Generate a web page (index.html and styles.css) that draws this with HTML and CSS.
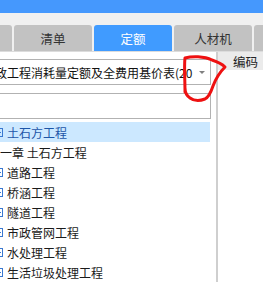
FILE: index.html
```html
<!DOCTYPE html>
<html lang="zh">
<head>
<meta charset="utf-8">
<link rel="stylesheet" href="styles.css">
</head>
<body>
<div class="topbar"></div>
<div class="tabstrip">
  <div class="tab"></div>
  <div class="tab">清单</div>
  <div class="tab active">定额</div>
  <div class="tab">人材机</div>
  <div class="tab"></div>
</div>
<div class="main">
  <div class="left">
    <div class="left-inner">
      <div class="combo">
        <span class="combo-text">市政工程消耗量定额及全费用基价表(2014)</span>
        <span class="arrow"></span>
      </div>
      <div class="search"></div>
      <ul class="tree">
        <li class="row selected"><span class="exp"><svg width="9" height="9" viewBox="0 0 9 9"><rect x="0.5" y="0.5" width="8" height="8" fill="none" stroke="#3a78d0"/><path d="M2 4.5h5M4.5 2v5" stroke="#3a78d0"/></svg></span><span class="label">土石方工程</span></li>
        <li class="row chapter"><span class="label">第一章 土石方工程</span></li>
        <li class="row"><span class="exp"><svg width="9" height="9" viewBox="0 0 9 9"><rect x="0.5" y="0.5" width="8" height="8" fill="none" stroke="#3a78d0"/><path d="M2 4.5h5M4.5 2v5" stroke="#3a78d0"/></svg></span><span class="label">道路工程</span></li>
        <li class="row"><span class="exp"><svg width="9" height="9" viewBox="0 0 9 9"><rect x="0.5" y="0.5" width="8" height="8" fill="none" stroke="#3a78d0"/><path d="M2 4.5h5M4.5 2v5" stroke="#3a78d0"/></svg></span><span class="label">桥涵工程</span></li>
        <li class="row"><span class="exp"><svg width="9" height="9" viewBox="0 0 9 9"><rect x="0.5" y="0.5" width="8" height="8" fill="none" stroke="#3a78d0"/><path d="M2 4.5h5M4.5 2v5" stroke="#3a78d0"/></svg></span><span class="label">隧道工程</span></li>
        <li class="row"><span class="exp"><svg width="9" height="9" viewBox="0 0 9 9"><rect x="0.5" y="0.5" width="8" height="8" fill="none" stroke="#3a78d0"/><path d="M2 4.5h5M4.5 2v5" stroke="#3a78d0"/></svg></span><span class="label">市政管网工程</span></li>
        <li class="row"><span class="exp"><svg width="9" height="9" viewBox="0 0 9 9"><rect x="0.5" y="0.5" width="8" height="8" fill="none" stroke="#3a78d0"/><path d="M2 4.5h5M4.5 2v5" stroke="#3a78d0"/></svg></span><span class="label">水处理工程</span></li>
        <li class="row"><span class="exp"><svg width="9" height="9" viewBox="0 0 9 9"><rect x="0.5" y="0.5" width="8" height="8" fill="none" stroke="#3a78d0"/><path d="M2 4.5h5M4.5 2v5" stroke="#3a78d0"/></svg></span><span class="label">生活垃圾处理工程</span></li>
      </ul>
    </div>
  </div>
  <div class="right">
    <div class="colhead">编码</div>
  </div>
</div>
<svg class="annot" width="263" height="282" viewBox="0 0 263 282">
  <path d="M185 92 C185 80 184 66 185 58 C192 56 204 56 212 60 C218 62 222 64 225 67 C220 72 216 78 213 86 C211 92 209 97 205 99 C200 101 194 101 190 98 C187 96 185 94 185 88" fill="none" stroke="#ee1111" stroke-width="3" stroke-linecap="round" stroke-linejoin="round"/>
</svg>
</body>
</html>
```

FILE: styles.css
```css
* { box-sizing: border-box; }
html, body { margin: 0; padding: 0; }
body {
  width: 263px;
  height: 282px;
  overflow: hidden;
  position: relative;
  background: #ffffff;
  font-family: "Noto Sans CJK SC", "Noto Sans", sans-serif;
  font-size: 12px;
  color: #1a1a1a;
}
.topbar {
  height: 13px;
  background: #4598fd;
}
.tabstrip {
  display: flex;
  gap: 2px;
  background: #f0f0f0;
  padding-top: 12px;
  margin-left: -66px;
  height: 39px;
  border-bottom: 1px solid #dcdcdc;
}
.tab {
  flex: 0 0 78px;
  height: 26px;
  background: #c2c2c2;
  border-radius: 3px 3px 0 0;
  color: #333333;
  font-size: 12.5px;
  display: flex;
  align-items: center;
  justify-content: center;
}
.tab.active {
  background: #409bff;
  color: #ffffff;
}
.main {
  display: flex;
  height: 230px;
}
.left {
  width: 216px;
  flex: 0 0 216px;
  overflow: hidden;
}
.left-inner {
  margin-left: -24px;
  width: 235px;
  padding-top: 7px;
}
.combo {
  height: 26px;
  border: 1px solid #b2b2b2;
  display: flex;
  align-items: center;
  padding-left: 6px;
}
.combo-text {
  flex: 1;
  white-space: nowrap;
  overflow: hidden;
  color: #111111;
}
.arrow {
  flex: 0 0 17px;
  height: 100%;
  display: flex;
  align-items: center;
  justify-content: center;
}
.arrow::before {
  content: "";
  border-left: 3px solid transparent;
  border-right: 3px solid transparent;
  border-top: 3px solid #808080;
}
.search {
  margin-top: 8px;
  height: 26px;
  border: 1px solid #b2b2b2;
}
.tree {
  list-style: none;
  margin: 3px 0 0 0;
  padding: 0;
  width: 234px;
}
.row {
  height: 20px;
  display: flex;
  align-items: center;
  padding-left: 18px;
  white-space: nowrap;
}
.row.selected {
  background: #cce8ff;
}
.row.selected .label {
  color: #1d55a8;
}
.row.chapter {
  padding-left: 12px;
}
.exp {
  width: 9px;
  height: 9px;
  display: flex;
  margin-right: 4px;
}
.right {
  flex: 1;
  border-left: 2px solid #cfcfcf;
}
.colhead {
  height: 18px;
  background: #ebebeb;
  padding-left: 15px;
  display: flex;
  align-items: center;
  font-size: 12.5px;
  color: #222222;
}
.annot {
  position: absolute;
  left: 0;
  top: 0;
  pointer-events: none;
}
```
